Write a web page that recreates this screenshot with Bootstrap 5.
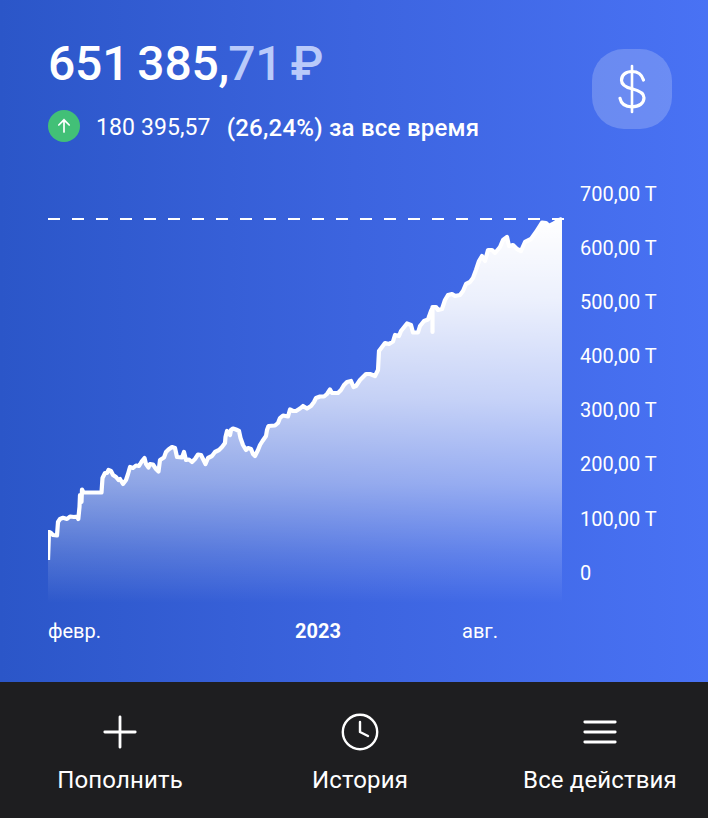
<!DOCTYPE html>
<html lang="ru">
<head>
    <meta charset="UTF-8">
    <meta name="viewport" content="width=device-width, initial-scale=1.0">
    <title>Портфель</title>
    <link rel="stylesheet" href="https://cdn.jsdelivr.net/npm/bootstrap@5.3.0/dist/css/bootstrap.min.css">
    <style>
    body {
        font-family: Roboto, "Liberation Sans", sans-serif;
        background-color: #1e1e20;
        color: #fff;
    }

    .screen {
        width: 708px;
        height: 818px;
        overflow: hidden;
    }

    .portfolio {
        height: 682px;
        background: linear-gradient(90deg, #2b56c8 0%, #3c64df 50%, #4972f4 100%);
    }

    .summary {
        height: 180px;
        padding: 34px 36px 0 48px;
    }

    .total {
        font-size: 48px;
        line-height: 60px;
        font-weight: 500;
        letter-spacing: -.2px;
        word-spacing: -3.6px;
        white-space: pre;
    }

    .total .cents {
        color: #b9cafa;
        margin-left: -1px;
    }

    .profit {
        height: 32px;
        margin-top: 16px;
        font-size: 23px;
        line-height: 32px;
        white-space: pre;
    }

    .profit svg {
        margin-right: 16px;
    }

    .profit .amount {
        letter-spacing: .1px;
        padding-top: 4px;
    }

    .profit .period {
        margin-left: 16px;
        padding-top: 4px;
        font-size: 24px;
        font-weight: 500;
        letter-spacing: .24px;
    }

    .currency {
        width: 80px;
        height: 80px;
        margin-top: 15px;
        border-radius: 32px;
        background-color: rgba(255, 255, 255, .2);
    }

    .scale {
        width: 128px;
        font-size: 20px;
        line-height: 24px;
        padding-top: 2px;
    }

    .scale div {
        height: 54.1px;
    }

    .months {
        padding: 4px 0 0 48px;
        font-size: 20px;
        line-height: 24px;
    }

    .months .first { width: 247px; }
    .months .year { width: 167px; }

    .actions {
        height: 136px;
        background-color: #1e1e20;
        padding-top: 30px;
    }

    .actions a {
        width: 240px;
        flex: none;
        font-size: 24px;
        line-height: 28px;
        letter-spacing: .15px;
    }

    .actions svg {
        margin-bottom: 14px;
    }
    </style>
</head>
<body>
    <div class="screen">
        <main class="portfolio">
            <header class="summary d-flex justify-content-between align-items-start">
                <div>
                    <div class="total">651 385,<span class="cents">71 ₽</span></div>
                    <div class="profit d-flex align-items-center">
                        <svg width="32" height="32" viewBox="0 0 32 32" fill="none">
                            <circle cx="16" cy="16" r="16" fill="#42c077"/>
                            <path d="M16 22V10M10.8 15 16 9.8l5.2 5.2" stroke="#fff" stroke-width="1.7" stroke-linecap="round"/>
                        </svg>
                        <span class="amount">180 395,57</span>
                        <span class="period">(26,24%) за все время</span>
                    </div>
                </div>
                <div class="currency d-flex align-items-center justify-content-center">
                    <svg width="32" height="50" viewBox="0 0 32 50" fill="none" stroke="#fff" stroke-linecap="round">
                        <path d="M16 2v46" stroke-width="2.6"/>
                        <path d="M27.500 16C26 11 22 7.500 16 7.500 9.500 7.500 5.500 11.200 5.500 16.200c0 5 4 7 10.500 8.600s12 3.700 12 9c0 5.500-5 9-12 9-6.500 0-11-3-12-8.500" stroke-width="3.2"/>
                    </svg>
                </div>
            </header>

            <div class="d-flex">
                <svg width="580" height="430" viewBox="0 180 580 430" fill="none">
                    <defs>
                        <linearGradient id="areaFill" gradientUnits="userSpaceOnUse" x1="0" y1="219" x2="0" y2="603">
                            <stop offset="0" stop-color="#fff"/>
                            <stop offset=".21" stop-color="#fff" stop-opacity=".9"/>
                            <stop offset=".47" stop-color="#fff" stop-opacity=".7"/>
                            <stop offset=".69" stop-color="#fff" stop-opacity=".45"/>
                            <stop offset=".87" stop-color="#fff" stop-opacity=".17"/>
                            <stop offset="1" stop-color="#fff" stop-opacity="0"/>
                        </linearGradient>
                        <clipPath id="plotArea"><path d="M48 180H562V610H48Z"/></clipPath>
                    </defs>
                    <path id="area" fill="url(#areaFill)"/>
                    <path d="M48 219H564" stroke="#fff" stroke-width="2" stroke-dasharray="12 12"/>
                    <path id="line" stroke="#fff" stroke-width="4.2" stroke-linejoin="round" clip-path="url(#plotArea)"/>
                </svg>
                <div class="scale">
                    <div>700,00 T</div>
                    <div>600,00 T</div>
                    <div>500,00 T</div>
                    <div>400,00 T</div>
                    <div>300,00 T</div>
                    <div>200,00 T</div>
                    <div>100,00 T</div>
                    <div>0</div>
                </div>
            </div>

            <div class="months d-flex">
                <span class="first">февр.</span>
                <span class="year fw-bold">2023</span>
                <span>авг.</span>
            </div>
        </main>

        <nav class="actions d-flex">
            <a href="#" class="d-flex flex-column align-items-center text-white text-decoration-none">
                <svg width="40" height="40" viewBox="0 0 40 40" fill="none" stroke="#fff" stroke-width="2.8" stroke-linecap="round">
                    <path d="M20 4.800v30.400M4.800 20h30.400"/>
                </svg>
                Пополнить
            </a>
            <a href="#" class="d-flex flex-column align-items-center text-white text-decoration-none">
                <svg width="40" height="40" viewBox="0 0 40 40" fill="none" stroke="#fff" stroke-width="2.400" stroke-linecap="round" stroke-linejoin="round">
                    <circle cx="20" cy="20" r="17.200"/>
                    <path d="M20 10v10l8 4"/>
                </svg>
                История
            </a>
            <a href="#" class="d-flex flex-column align-items-center text-white text-decoration-none">
                <svg width="40" height="40" viewBox="0 0 40 40" fill="none" stroke="#fff" stroke-width="2.800" stroke-linecap="round">
                    <path d="M4.800 10h30.400M4.800 20h30.400M4.800 30h30.400"/>
                </svg>
                Все действия
            </a>
        </nav>
    </div>

    <script>
        // portfolio value history, x/y in chart units
        const points = `48,560 48.500,546 49,532 51,533 53,535 57,535.500 58,522 60,519 63,517.800 67,519
            70,516.500 74,517 77,516.500 78.300,519 79.500,507 80,495 81.500,502 82,489.500 83.500,492.500 101.500,492.500 102.500,478
            105,473 107,473 108.500,470 111,471 113,475 116,477 118.500,480 120,479 123,484 126,480 128,474 130,467 133,468
            136,465.500 139,466 142,461 144.500,458 146,464 148.500,467.500 150,464 153,464.500 156,469 158.500,471.500
            160,460 164,457.500 166,452 168.500,449.500 172,447 175,448 177,457 182,457.500 184,452 186,460 189,459.500
            192,462 195,459 198,454.500 201,455 203,459 205.500,464 208,458 212,456 215,452 219,450 222,447 225,443
            225.500,437 227,431 230,435 231,430 233,428.500 236,429.500 239,431 240.500,438 243,445 246,450 248,448
            251,449 253,454 255,456 258,450 260,445 262.500,441 266,436 267,430 268.500,426 275,425.500 278,423
            280,418 283,415.500 288,416.500 290,409.500 293,411 296,411 300,408.500 303,406 307,408.500 311,406
            314,402 316,398 320,396.500 324,396.500 327,394 330,389.500 332,393 338,393 341,390 344,385 347,382
            351,381 353.500,387 356,386 360,380 363,377 366,374 370,374 375,376 378,370 379,351 382,347 385,343
            389,344 393,341.500 395,335 399,336 401,331 405,326 407,323.500 411,325 413,332.500 418,332.500
            420,326 424,321 428,319.500 431,311 432.500,308 432.500,332 432.500,307 436,307 438,310 442,309 445,300 448,295
            452,294 455,296 460,295 463,291 466,284 470,282 473,278 476,270 479,261 482,256 485,261 488,250
            492,250 495,253 500,247 503,240 507,237 509,246 513,245 517,249 521,251 525,242 531,239 536,232
            542,222.500 546,223 549,226 553,224 556,222 559,220 562,219`.trim().replace(/\s+/g, 'L');

        document.getElementById('line').setAttribute('d', 'M' + points);
        document.getElementById('area').setAttribute('d', 'M' + points + 'V603H48Z');
    </script>
    <script src="https://cdn.jsdelivr.net/npm/bootstrap@5.3.0/dist/js/bootstrap.bundle.min.js"></script>
</body>
</html>
